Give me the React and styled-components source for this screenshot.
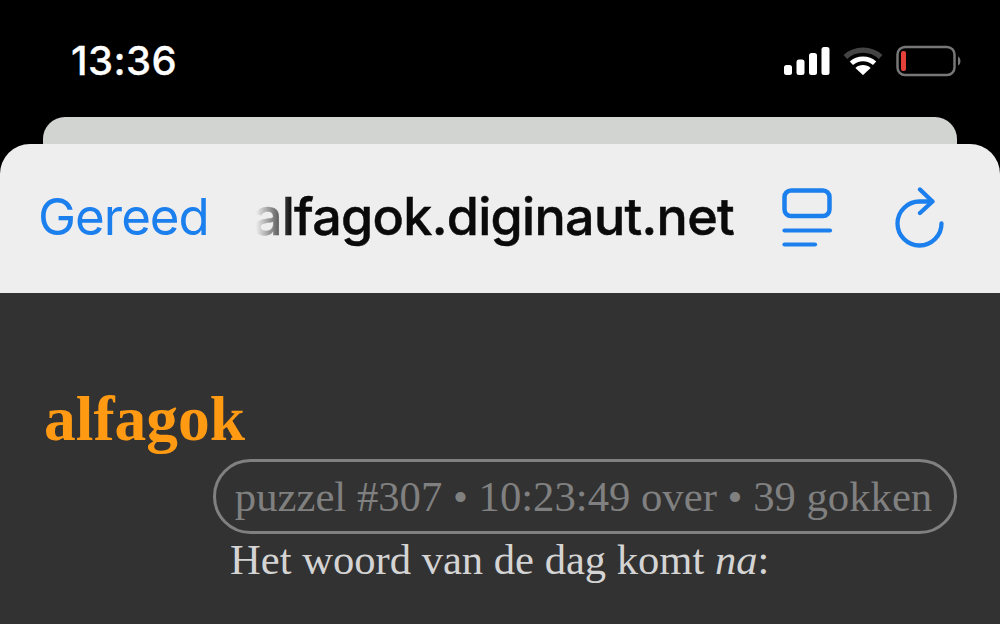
import React from "react";
import styled, { createGlobalStyle } from "styled-components";

const Global = createGlobalStyle`
  html, body { margin: 0; padding: 0; background: #000; }
`;

const Screen = styled.div`
  width: 1000px;
  height: 624px;
  overflow: hidden;
  background: #000;
  display: flex;
  flex-direction: column;
`;

const StatusBar = styled.div`
  height: 117px;
  flex: none;
  box-sizing: border-box;
  padding: 37px 38px 0 71px;
  display: flex;
  justify-content: space-between;
  align-items: flex-start;
`;

const Clock = styled.div`
  font: 500 40px/48px Inter, "Liberation Sans", sans-serif;
  color: #fff;
  letter-spacing: 0.4px;
  -webkit-text-stroke: 0.3px #fff;
`;

const StatusIcons = styled.div`
  display: flex;
  align-items: center;
  gap: 13px;
  height: 48px;
`;

const BackSheet = styled.div`
  height: 27px;
  flex: none;
  margin: 0 43px;
  background: #d2d4d1;
  border-radius: 22px 22px 0 0;
`;

const Sheet = styled.div`
  height: 149px;
  flex: none;
  box-sizing: border-box;
  background: #eeeeee;
  border-radius: 30px 30px 0 0;
  padding: 0 55px 0 38px;
  display: flex;
  align-items: center;
`;

const DoneButton = styled.div`
  font: 400 51px/60px Inter, "Liberation Sans", sans-serif;
  color: #1c7fee;
  letter-spacing: -1px;
  width: 216px;
  flex: none;
  margin-top: -4px;
`;

const Url = styled.div`
  width: 480px;
  flex: none;
  overflow: hidden;
  white-space: nowrap;
  direction: rtl;
  font: 500 52px/60px Inter, "Liberation Sans", sans-serif;
  color: #0a0a0a;
  letter-spacing: -0.7px;
  -webkit-text-stroke: 0.5px #0a0a0a;
  margin-top: -4px;
  -webkit-mask-image: linear-gradient(90deg, transparent 2px, #000 38px);
  mask-image: linear-gradient(90deg, transparent 2px, #000 38px);
`;

const Tools = styled.div`
  margin-left: auto;
  display: flex;
  align-items: center;
  gap: 61px;
  margin-top: -2px;
`;

const Page = styled.main`
  flex: 1;
  background: #323232;
  box-sizing: border-box;
  padding: 88px 43px 0 44px;
  font-family: "Liberation Serif", "Times New Roman", serif;
`;

const Title = styled.h1`
  margin: 0 0 2px;
  font: 700 63.5px/76px "Liberation Serif", serif;
  color: #ff9a12;
`;

const InfoRow = styled.div`
  display: flex;
  justify-content: flex-end;
`;

const InfoPill = styled.div`
  box-sizing: border-box;
  height: 75px;
  width: 744px;
  border: 3px solid #808080;
  border-radius: 38px;
  padding-right: 3px;
  font-size: 42.7px;
  line-height: 69px;
  color: #808080;
  text-align: center;
  white-space: nowrap;
`;

const Prompt = styled.p`
  margin: 1px 0 0 186px;
  font-size: 42.6px;
  line-height: 50px;
  color: #d4d4d4;
  white-space: nowrap;
`;

const Signal = () => (
  <svg width="46" height="28" viewBox="0 0 46 28" fill="#fff">
    <rect x="0" y="18" width="8" height="10" rx="2.5" />
    <rect x="12.5" y="12.5" width="8" height="15.5" rx="2.5" />
    <rect x="25" y="6" width="8" height="22" rx="2.5" />
    <rect x="37.5" y="0" width="8" height="28" rx="2.5" />
  </svg>
);

const Wifi = () => (
  <svg width="40" height="28.6" viewBox="0 0 42 30" fill="none">
    <path d="M2.5 10.5C12.5 1 29.5 1 39.5 10.5" stroke="#444" strokeWidth="5.5" />
    <path d="M8.8 17C15.5 10.8 26.5 10.8 33.2 17" stroke="#fff" strokeWidth="5" />
    <path d="M21 29.5L13 22C17.5 18 24.5 18 29 22Z" fill="#fff" />
  </svg>
);

const Battery = () => (
  <svg width="66" height="32" viewBox="0 0 66 32" fill="none">
    <rect x="1.5" y="2" width="57" height="28" rx="7.5" stroke="#777" strokeWidth="2.5" />
    <rect x="5" y="6" width="5" height="20" rx="2" fill="#e5403a" />
    <path d="M62 11.5C65 12.5 65.5 19.5 62 20.5Z" fill="#777" />
  </svg>
);

const Reader = () => (
  <svg width="52" height="60" viewBox="0 0 52 60" fill="none" stroke="#1c7fee" strokeLinecap="round">
    <rect x="2.5" y="2.5" width="45" height="25.5" rx="6.5" strokeWidth="4.5" />
    <path d="M2.5 42.5H48" strokeWidth="4.2" />
    <path d="M2.5 56.5H33" strokeWidth="4.2" />
  </svg>
);

const Reload = () => (
  <svg width="50" height="62" viewBox="0 0 50 62" fill="none" stroke="#1c7fee" strokeWidth="4.3" strokeLinecap="round" strokeLinejoin="round">
    <path d="M46.5 36.5A22 22 0 1 1 24.5 14.5H37" />
    <path d="M25 2.5L37.5 14.5L25 26" />
  </svg>
);

export default function App() {
  return (
    <Screen>
      <Global />
      <StatusBar>
        <Clock>13:36</Clock>
        <StatusIcons>
          <Signal />
          <Wifi />
          <Battery />
        </StatusIcons>
      </StatusBar>
      <BackSheet />
      <Sheet>
        <DoneButton>Gereed</DoneButton>
        <Url><bdi>alfagok.diginaut.net</bdi></Url>
        <Tools>
          <Reader />
          <Reload />
        </Tools>
      </Sheet>
      <Page>
        <Title>alfagok</Title>
        <InfoRow>
          <InfoPill>puzzel #307 • 10:23:49 over • 39 gokken</InfoPill>
        </InfoRow>
        <Prompt>Het woord van de dag komt <em>na</em>:</Prompt>
      </Page>
    </Screen>
  );
}
